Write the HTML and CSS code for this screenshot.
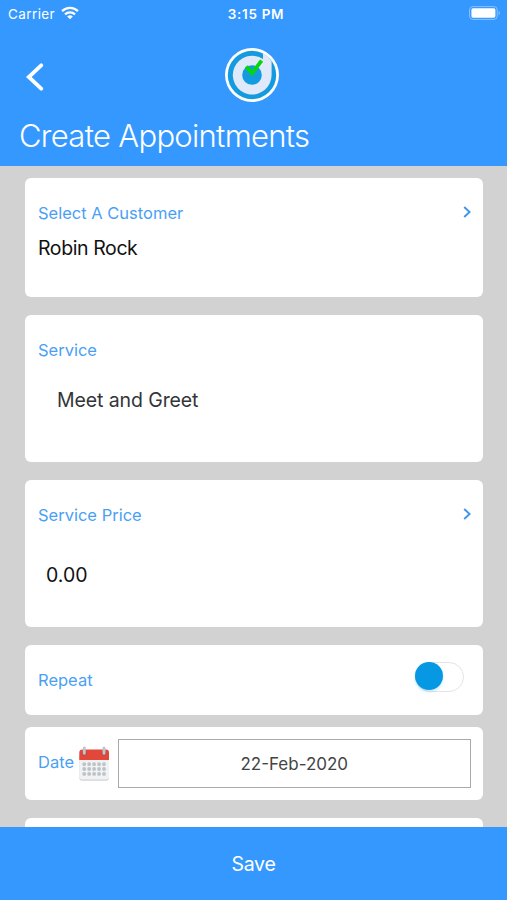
FILE: index.html
```html
<!DOCTYPE html>
<html lang="en">
<head>
    <meta charset="UTF-8">
    <meta name="viewport" content="width=device-width, initial-scale=1.0">
    <title>Create Appointments</title>
    <link rel="stylesheet" href="styles.css">
</head>
<body>
    <header class="header">
        <!-- Status bar -->
        <div class="status-bar">
            <div class="status-left">
                <span class="carrier">Carrier</span>
                <svg class="wifi" width="18" height="14" viewBox="0 0 18 14">
                    <g fill="none" stroke="#fff" stroke-width="2.2">
                        <path d="M1.1 5.1a11.2 11.2 0 0 1 15.8 0"/>
                        <path d="M4 8.4a7.1 7.1 0 0 1 10 0"/>
                    </g>
                    <path d="M9 13.2 6.2 10.5a4 4 0 0 1 5.6 0z" fill="#fff"/>
                </svg>
            </div>
            <span class="clock">3:15 PM</span>
            <svg class="battery" width="32" height="14" viewBox="0 0 32 14">
                <rect x=".6" y=".6" width="27.6" height="12.8" rx="3.2" fill="none" stroke="#8bc2ff" stroke-width="1"/>
                <rect x="2.4" y="2.3" width="24" height="9.4" rx="1.6" fill="#fff"/>
                <path d="M29.6 4.8v4.4c1.8-.7 1.8-3.7 0-4.4z" fill="#8bc2ff"/>
            </svg>
        </div>

        <div class="nav-bar">
            <button class="back-button" type="button" aria-label="Back">
                <svg width="18" height="28" viewBox="0 0 18 28">
                    <path d="M15.2 2.3 2.8 14l12.4 11.7" fill="none" stroke="#fff" stroke-width="3.8" stroke-linecap="round"/>
                </svg>
            </button>
            <svg class="logo" width="54" height="54" viewBox="0 0 54 54">
                <circle cx="27" cy="27" r="27" fill="#fff"/>
                <circle cx="27" cy="27" r="24.2" fill="#149ade"/>
                <path d="M38 5v6A19.4 19.4 0 1 0 46.6 27V13.4A24 24 0 0 0 38 5z" fill="#dfe9fa"/>
                <circle cx="27" cy="27" r="9.8" fill="#149ade"/>
                <path d="M21.3 18.4 27 25.3 36.6 12.6" fill="none" stroke="#06d60b" stroke-width="3.8"/>
            </svg>
        </div>

        <h1>Create Appointments</h1>
    </header>

    <main class="form">
        <section class="card customer">
            <div class="card-head">
                <span class="label">Select A Customer</span>
                <svg class="chevron" width="8" height="12" viewBox="0 0 8 12"><path d="M1.2 1 6.6 6 1.2 11"/></svg>
            </div>
            <p class="value">Robin Rock</p>
        </section>

        <section class="card service">
            <div class="card-head">
                <span class="label">Service</span>
            </div>
            <p class="value">Meet and Greet</p>
        </section>

        <section class="card price">
            <div class="card-head">
                <span class="label">Service Price</span>
                <svg class="chevron" width="8" height="12" viewBox="0 0 8 12"><path d="M1.2 1 6.6 6 1.2 11"/></svg>
            </div>
            <p class="value">0.00</p>
        </section>

        <section class="card repeat">
            <span class="label">Repeat</span>
            <div class="switch"><div class="knob"></div></div>
        </section>

        <section class="card date">
            <span class="label">Date</span>
            <svg class="calendar" width="32" height="36" viewBox="0 0 32 36">
                <rect x="1.3" y="8" width="29.7" height="26.7" rx="3" fill="#cfd4d8"/>
                <path d="M1.3 12H31v18.4a3 3 0 0 1-3 3H4.3a3 3 0 0 1-3-3z" fill="#f0f2f3"/>
                <path d="M1.3 14V6.5a3 3 0 0 1 3-3H28a3 3 0 0 1 3 3V14z" fill="#e2473a"/>
                <g fill="#b94a42">
                    <circle cx="6.3" cy="7" r="2.6"/>
                    <circle cx="26" cy="7" r="2.6"/>
                </g>
                <path d="M6.3 2v5.2M26 2v5.2" stroke="#bfc5c9" stroke-width="3" stroke-linecap="round"/>
                <!-- Day dots -->
                <g stroke="#bdc2c7" stroke-width="3.8" stroke-linecap="round" stroke-dasharray="0 4.95">
                    <path d="M6.2 18.2h20"/>
                    <path d="M6.2 23h20"/>
                    <path d="M6.2 27.9h20"/>
                </g>
            </svg>
            <div class="date-box">22-Feb-2020</div>
        </section>

        <section class="card next"></section>
    </main>

    <button class="save-button" type="button">Save</button>
</body>
</html>
```
FILE: styles.css
```css
* {
    box-sizing: border-box;
}

body {
    margin: 0;
    height: 100vh;
    display: flex;
    flex-direction: column;
    overflow: hidden;
    font-family: Inter, "Liberation Sans", sans-serif;
    background-color: #d2d2d2;
}

button {
    border: none;
    padding: 0;
    font-family: inherit;
    cursor: pointer;
}

svg {
    display: block;
}

/* Header */
.header {
    flex: none;
    height: 166px;
    background-color: #3498ff;
    color: white;
}

.status-bar {
    height: 28px;
    padding: 0 6px 0 8px;
    display: grid;
    grid-template-columns: 1fr auto 1fr;
    align-items: center;
}

.status-left {
    display: flex;
    align-items: center;
    gap: 6px;
    font-size: 13.5px;
}

.carrier {
    letter-spacing: 0.4px;
}

.wifi {
    margin-top: -2px;
}

.clock {
    padding-left: 3px;
    font-size: 13.5px;
    font-weight: 600;
    letter-spacing: 0.7px;
}

.battery {
    justify-self: end;
    margin-top: -2px;
}

.nav-bar {
    height: 94px;
    padding: 0 29px 0 25px;
    display: grid;
    grid-template-columns: 1fr auto 1fr;
    align-items: center;
}

.back-button {
    width: 18px;
    height: 32px;
    margin-left: 1px;
    padding: 4px 0 0;
    background: none;
}

h1 {
    margin: 0;
    padding-left: 19px;
    font-size: 31px;
    font-weight: 350;
    line-height: 28px;
    letter-spacing: -0.7px;
}

/* Form cards */
.form {
    flex: 1;
    min-height: 0;
    overflow: hidden;
    padding: 12px 24.5px 0 25px;
}

.card {
    background-color: white;
    border-radius: 6px;
    padding: 0 13px;
    margin-bottom: 18px;
}

.card-head {
    display: flex;
    justify-content: space-between;
    align-items: center;
    height: 70px;
}

.label {
    font-size: 16.5px;
    color: #4a9ff5;
}

.chevron {
    margin: -3px -1px 0 0;
    fill: none;
    stroke: #4195ea;
    stroke-width: 1.9;
}

.value {
    margin: 0;
    font-size: 19.5px;
    line-height: 24px;
    color: #111;
}

.customer {
    height: 119px;
}

.customer .value {
    margin-top: -12px;
    letter-spacing: -0.4px;
}

.service {
    height: 147px;
}

.service .value {
    padding: 3px 0 0 19px;
    color: #333538;
    letter-spacing: -0.1px;
}

.price {
    height: 147px;
}

.price .value {
    padding: 13px 0 0 8px;
}

.repeat {
    height: 70px;
    margin-bottom: 12px;
    display: flex;
    justify-content: space-between;
    align-items: center;
}

.switch {
    width: 49px;
    height: 30px;
    margin: -7px 6px 0 0;
    border: 1.5px solid #e4e4e6;
    border-radius: 15px;
}

.knob {
    width: 28px;
    height: 28px;
    margin: -1px 0 0 -1px;
    border-radius: 50%;
    background-color: #0698e3;
    box-shadow: 0 2px 3px rgba(6, 152, 227, 0.2);
}

.date {
    height: 73px;
    display: flex;
    align-items: center;
    padding-right: 12px;
}

.date .label {
    width: 40px;
    margin-top: -3px;
}

.calendar {
    flex: none;
}

.date-box {
    flex: 1;
    height: 49px;
    margin-left: 8px;
    border: 1px solid #a9a9a9;
    text-align: center;
    font-size: 17px;
    line-height: 48px;
    color: #444;
}

.next {
    height: 73px;
}

/* Bottom bar */
.save-button {
    flex: none;
    height: 73px;
    background-color: #3498ff;
    color: white;
    font-size: 19.5px;
    letter-spacing: -0.3px;
}
```
